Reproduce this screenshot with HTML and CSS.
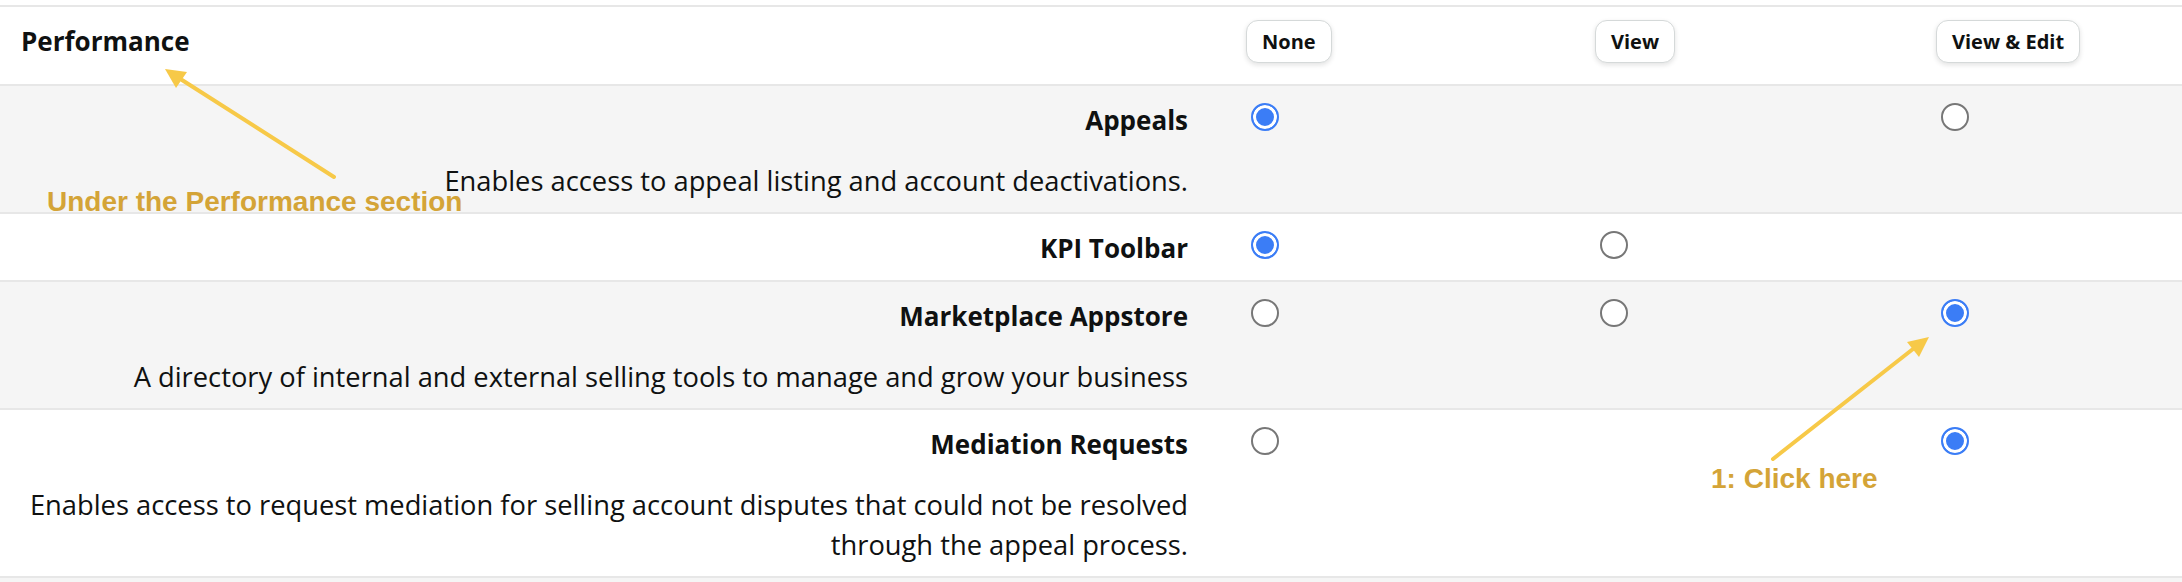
FILE: index.html
```html
<!DOCTYPE html>
<html lang="en">
<head>
<meta charset="utf-8">
<title>Performance permissions</title>
<link rel="stylesheet" href="styles.css">
</head>
<body>
<div class="page">
  <div class="perm-table">
    <div class="row header">
      <div class="section-title">Performance</div>
      <div class="opt-cell"><button class="col-btn">None</button></div>
      <div class="opt-cell"><button class="col-btn">View</button></div>
      <div class="opt-cell"><button class="col-btn">View &amp; Edit</button></div>
    </div>

    <div class="row shaded">
      <div class="label-cell">
        <div class="title">Appeals</div>
        <div class="desc">Enables access to appeal listing and account deactivations.</div>
      </div>
      <div class="opt-cell radio-cell"><input class="radio" type="radio" name="appeals" checked></div>
      <div class="opt-cell radio-cell"></div>
      <div class="opt-cell radio-cell"><input class="radio" type="radio" name="appeals"></div>
    </div>

    <div class="row">
      <div class="label-cell">
        <div class="title">KPI Toolbar</div>
      </div>
      <div class="opt-cell radio-cell"><input class="radio" type="radio" name="kpi" checked></div>
      <div class="opt-cell radio-cell"><input class="radio" type="radio" name="kpi"></div>
      <div class="opt-cell radio-cell"></div>
    </div>

    <div class="row shaded">
      <div class="label-cell">
        <div class="title">Marketplace Appstore</div>
        <div class="desc">A directory of internal and external selling tools to manage and grow your business</div>
      </div>
      <div class="opt-cell radio-cell"><input class="radio" type="radio" name="appstore"></div>
      <div class="opt-cell radio-cell"><input class="radio" type="radio" name="appstore"></div>
      <div class="opt-cell radio-cell"><input class="radio" type="radio" name="appstore" checked></div>
    </div>

    <div class="row">
      <div class="label-cell">
        <div class="title">Mediation Requests</div>
        <div class="desc">Enables access to request mediation for selling account disputes that could not be resolved<br>through the appeal process.</div>
      </div>
      <div class="opt-cell radio-cell"><input class="radio" type="radio" name="mediation"></div>
      <div class="opt-cell radio-cell"></div>
      <div class="opt-cell radio-cell"><input class="radio" type="radio" name="mediation" checked></div>
    </div>

    <div class="row shaded stub"></div>
  </div>

  <div class="note note-section">Under the Performance section</div>
  <div class="note note-click">1: Click here</div>

  <svg class="arrows" width="2182" height="582" viewBox="0 0 2182 582" aria-hidden="true">
    <line x1="334" y1="177" x2="182" y2="80" stroke="#f7c948" stroke-width="4" stroke-linecap="round"/>
    <polygon points="165,69 187,72 176,88" fill="#f7c948"/>
    <line x1="1773" y1="459" x2="1913" y2="349" stroke="#f7c948" stroke-width="4" stroke-linecap="round"/>
    <polygon points="1929,337 1919,357 1907,342" fill="#f7c948"/>
  </svg>
</div>
</body>
</html>
```

FILE: styles.css
```css
* { box-sizing: border-box; }

html, body {
  margin: 0;
  padding: 0;
  background: #ffffff;
}

body {
  font-family: "Open Sans", "Noto Sans", "Liberation Sans", sans-serif;
  color: #0f1111;
}

.page {
  position: relative;
  width: 2182px;
  height: 582px;
  overflow: hidden;
  padding-top: 5px;
}

.perm-table {
  border-top: 2px solid #e7e7e7;
}

.row {
  display: grid;
  grid-template-columns: 1246px 349px 341px 1fr;
  border-bottom: 2px solid #e7e7e7;
  background: #ffffff;
}

.row.shaded {
  background: #f5f5f5;
}

.row.stub {
  height: 12px;
  border-bottom: none;
}

.header {
  padding: 13px 0 21px;
}

.section-title {
  text-align: left;
  padding-left: 21px;
  font-size: 26px;
  font-weight: 700;
  line-height: 43px;
}

.label-cell {
  text-align: right;
  padding: 16px 58px 14px 0;
}

.title {
  font-size: 26px;
  font-weight: 700;
  line-height: 36px;
}

.desc {
  font-size: 27.3px;
  font-weight: 400;
  line-height: 40px;
  margin-top: 23px;
  margin-bottom: -3px;
}

.col-btn {
  height: 43px;
  padding: 0 15px;
  border: 1px solid #d5d9d9;
  border-radius: 12px;
  background: #ffffff;
  box-shadow: 0 2px 5px rgba(15, 17, 17, 0.12);
  font-family: "Open Sans", "Noto Sans", sans-serif;
  font-size: 20px;
  font-weight: 700;
  color: #0f1111;
}

.radio-cell {
  padding: 17px 0 0 5px;
}

.radio {
  appearance: none;
  -webkit-appearance: none;
  margin: 0;
  display: block;
  width: 28px;
  height: 28px;
  border-radius: 50%;
  border: 2.5px solid #777777;
  background: #ffffff;
}

.radio:checked {
  border-color: #3b7df6;
  background: #3b7df6;
  box-shadow: inset 0 0 0 3px #ffffff;
}

.note {
  position: absolute;
  font-family: "Liberation Sans", Arial, sans-serif;
  font-weight: 700;
  font-size: 28px;
  line-height: 32px;
  color: #d4a437;
  white-space: nowrap;
}

.note-section {
  left: 47px;
  top: 186px;
}

.note-click {
  left: 1711px;
  top: 463px;
}

.arrows {
  position: absolute;
  left: 0;
  top: 0;
  pointer-events: none;
}
```
